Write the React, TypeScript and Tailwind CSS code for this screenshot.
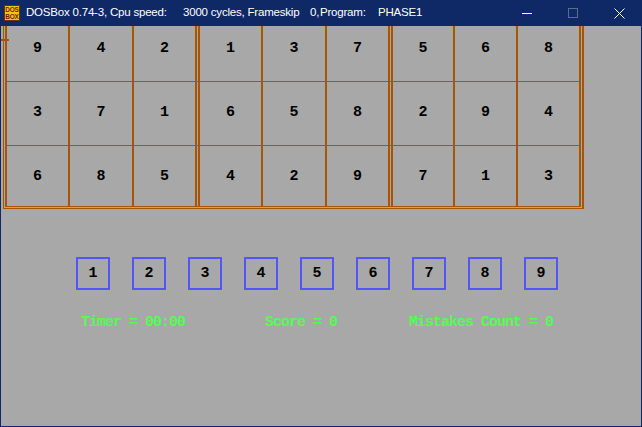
import React from "react";

const grid = [
  [9, 4, 2, 1, 3, 7, 5, 6, 8],
  [3, 7, 1, 6, 5, 8, 2, 9, 4],
  [6, 8, 5, 4, 2, 9, 7, 1, 3],
];

const dos = { fontFamily: '"Liberation Mono", "DejaVu Sans Mono", monospace' };

function Cell({ v, w }: { v: number; w: string }) {
  return (
    <div className={`${w} h-full flex justify-center pt-[24px]`}>
      <span className="text-[15px] leading-[14px] font-bold text-black" style={dos}>
        {v}
      </span>
    </div>
  );
}

function Line() {
  return <div className="w-[2px] h-full bg-[#a85400]" />;
}

function Block({ vals, widths }: { vals: number[]; widths: string[] }) {
  return (
    <div className="flex h-full">
      <Line />
      <Cell v={vals[0]} w={widths[0]} />
      <Line />
      <Cell v={vals[1]} w={widths[1]} />
      <Line />
      <Cell v={vals[2]} w={widths[2]} />
      <Line />
    </div>
  );
}

function Row({ vals, h }: { vals: number[]; h: string }) {
  return (
    <div className={`flex gap-[1px] ${h}`}>
      <Block vals={vals.slice(0, 3)} widths={["w-[61px]", "w-[62px]", "w-[61px]"]} />
      <Block vals={vals.slice(3, 6)} widths={["w-[61px]", "w-[62px]", "w-[61px]"]} />
      <Block vals={vals.slice(6, 9)} widths={["w-[60px]", "w-[61px]", "w-[61px]"]} />
    </div>
  );
}

function HLine() {
  return <div className="h-px w-full bg-[#a85400]" />;
}

export default function App() {
  return (
    <div className="w-[642px] h-[427px] bg-[#0f2966] flex flex-col overflow-hidden">
      {/* title bar */}
      <div
        className="h-[26px] flex items-center text-white text-[11.5px] tracking-[-0.2px] relative"
        style={{ fontFamily: '"Liberation Sans", Arial, sans-serif' }}
      >
        <div className="w-[26px] h-full flex items-center pl-[4px]">
          <svg width="16" height="16" viewBox="0 0 16 16">
            <rect x="0.5" y="0.5" width="15" height="15" fill="#f3c418" stroke="#6b3300" />
            <text x="8" y="7" textAnchor="middle" fontSize="6.5" fontWeight="bold" fill="#7a1a00" fontFamily="Liberation Sans, sans-serif">DOS</text>
            <text x="8" y="14" textAnchor="middle" fontSize="6.5" fontWeight="bold" fill="#7a1a00" fontFamily="Liberation Sans, sans-serif">BOX</text>
          </svg>
        </div>
        <span className="w-[157px] whitespace-pre">DOSBox 0.74-3, Cpu speed:</span>
        <span className="w-[127px] whitespace-pre">3000 cycles, Frameskip</span>
        <span className="w-[10px] whitespace-pre">0,</span>
        <span className="w-[58px] whitespace-pre">Program:</span>
        <span className="whitespace-pre">PHASE1</span>
        <div className="ml-auto flex items-center h-full">
          <div className="w-[46px] h-full flex items-center justify-center">
            <div className="w-[10px] h-px bg-white" />
          </div>
          <div className="w-[46px] h-full flex items-center justify-center">
            <div className="w-[10px] h-[10px] border border-[#5d6b8f]" />
          </div>
          <div className="w-[46px] h-full flex items-center justify-center">
            <svg width="11" height="11" viewBox="0 0 11 11">
              <path d="M0.5 0.5 L10.5 10.5 M10.5 0.5 L0.5 10.5" stroke="white" strokeWidth="1" />
            </svg>
          </div>
        </div>
      </div>

      {/* client area */}
      <div className="mx-[1px] h-[400px] bg-[#a8a8a8] overflow-hidden relative">
        <div className="absolute left-0 top-[13px] w-[8px] h-[2px] bg-[#a85400]" />
        <div className="mt-[-11px] ml-[2px] w-fit border-l border-t border-b border-r-2 border-[#a85400] p-[1px]">
          <div className="w-[576px] flex flex-col">
            <HLine />
            <Row vals={grid[0]} h="h-[63px]" />
            <HLine />
            <Row vals={grid[1]} h="h-[63px]" />
            <HLine />
            <Row vals={grid[2]} h="h-[60px]" />
            <HLine />
          </div>
        </div>

        <div className="mt-[48px] ml-[75px] flex gap-[22px]">
          {[1, 2, 3, 4, 5, 6, 7, 8, 9].map((n) => (
            <div
              key={n}
              className="w-[34px] h-[33px] border-2 border-[#5454fc] flex items-center justify-center"
            >
              <span className="text-[15px] leading-[14px] font-bold text-black" style={dos}>
                {n}
              </span>
            </div>
          ))}
        </div>

        <div
          className="mt-[25px] ml-[80px] flex text-[15px] leading-[16px] tracking-[-1px] font-bold text-[#54fc54] whitespace-pre"
          style={dos}
        >
          <span className="w-[184px]">Timer = 00:00</span>
          <span className="w-[144px]">Score = 0</span>
          <span>Mistakes Count = 0</span>
        </div>
      </div>
    </div>
  );
}
